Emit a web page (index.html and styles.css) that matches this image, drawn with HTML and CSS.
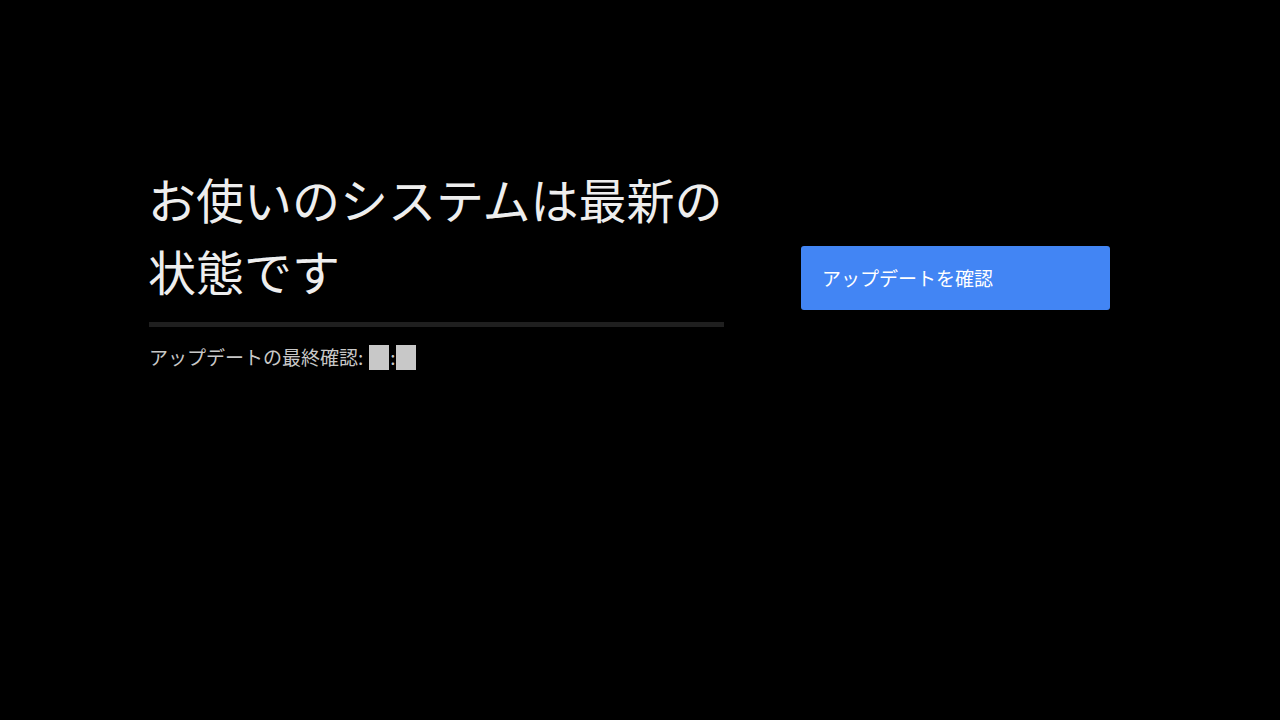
FILE: index.html
```html
<!DOCTYPE html>
<html lang="ja">
<head>
<meta charset="utf-8">
<link rel="stylesheet" href="styles.css">
</head>
<body>
<main class="screen">
  <section class="info">
    <h1 class="title">お使いのシステムは最新の状態です</h1>
    <div class="divider"></div>
    <p class="last-check">アップデートの最終確認: <span class="mask"></span><span class="colon">:</span><span class="mask"></span></p>
  </section>
  <section class="actions">
    <button class="btn">アップデートを確認</button>
  </section>
</main>
</body>
</html>
```
FILE: styles.css
```css
html, body {
  margin: 0;
  padding: 0;
  background: #000;
  width: 1280px;
  height: 720px;
  overflow: hidden;
}
body {
  font-family: "Noto Sans CJK JP", "Noto Sans", sans-serif;
  color: #eeeeee;
}
.screen {
  display: flex;
  align-items: flex-start;
  padding: 164px 0 0 149px;
  gap: 77px;
}
.info {
  width: 575px;
}
.title {
  margin: -2px 0 0 -1px;
  padding-bottom: 2px;
  font-size: 48px;
  font-weight: 400;
  line-height: 72px;
  color: #eeeeee;
}
.divider {
  margin-top: 14px;
  height: 5px;
  background: #1f1f1f;
}
.last-check {
  margin: 17px 0 0 0;
  font-size: 19px;
  line-height: 26px;
  color: #c8c8c8;
  display: flex;
  align-items: center;
}
.mask {
  display: inline-block;
  width: 20px;
  height: 25px;
  background: #c8c8c8;
}
.mask:first-of-type {
  margin-left: 6px;
}
.colon {
  width: 7px;
  text-align: center;
}
.actions {
  padding-top: 82px;
}
.btn {
  display: block;
  width: 309px;
  height: 64px;
  border: none;
  border-radius: 3px;
  background: #4285f4;
  color: #ffffff;
  font-family: "Noto Sans CJK JP", "Noto Sans", sans-serif;
  font-size: 19px;
  text-align: left;
  padding: 0 0 0 21px;
  line-height: 64px;
}
```
